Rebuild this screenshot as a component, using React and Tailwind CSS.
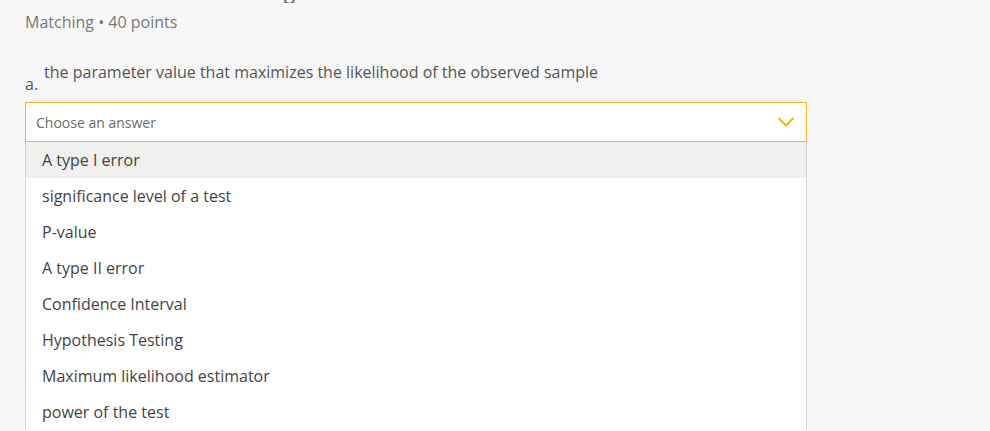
import { ChevronDown } from "lucide-react";

const options = [
  "A type I error",
  "significance level of a test",
  "P-value",
  "A type II error",
  "Confidence Interval",
  "Hypothesis Testing",
  "Maximum likelihood estimator",
  "power of the test",
];

export default function App() {
  return (
    <div
      className="min-h-screen bg-[#f7f7f7] text-[#4a4a4a] overflow-hidden"
      style={{ fontFamily: '"Open Sans", "Noto Sans", sans-serif' }}
    >
      {/* cut-off heading above */}
      <div className="h-[3px] overflow-hidden">
        <div className="-mt-[20px] pl-[284px] text-[20px] leading-[24px] text-[#555]">g</div>
      </div>

      <div className="px-[25px]">
        <div className="mt-[8px] text-[16px] leading-[22px] text-[#777]">Matching • 40 points</div>

        <div className="mt-[28px] flex">
          <span className="mt-[12px] text-[16px] leading-[22px] text-[#555]">a.</span>
          <span className="ml-[6px] text-[16px] leading-[22px] text-[#555]">
            the parameter value that maximizes the likelihood of the observed sample
          </span>
        </div>

        <div className="mt-[7px] w-[782px]">
          <div className="h-[40px] flex items-center justify-between border border-[#f3b61f] bg-white pl-[10px] pr-[6px]">
            <span className="text-[14px] text-[#6b6b6b]">Choose an answer</span>
            <ChevronDown size={28} strokeWidth={1.6} className="text-[#f5b400]" />
          </div>
          <div className="border-x border-[#d6d6d6] bg-white">
            {options.map((o, i) => (
              <div
                key={o}
                className={
                  "h-[36px] flex items-center pl-[16px] text-[16px] text-[#444] " +
                  (i === 0 ? "bg-[#f0f0ef]" : "")
                }
              >
                {o}
              </div>
            ))}
          </div>
        </div>
      </div>
    </div>
  );
}
